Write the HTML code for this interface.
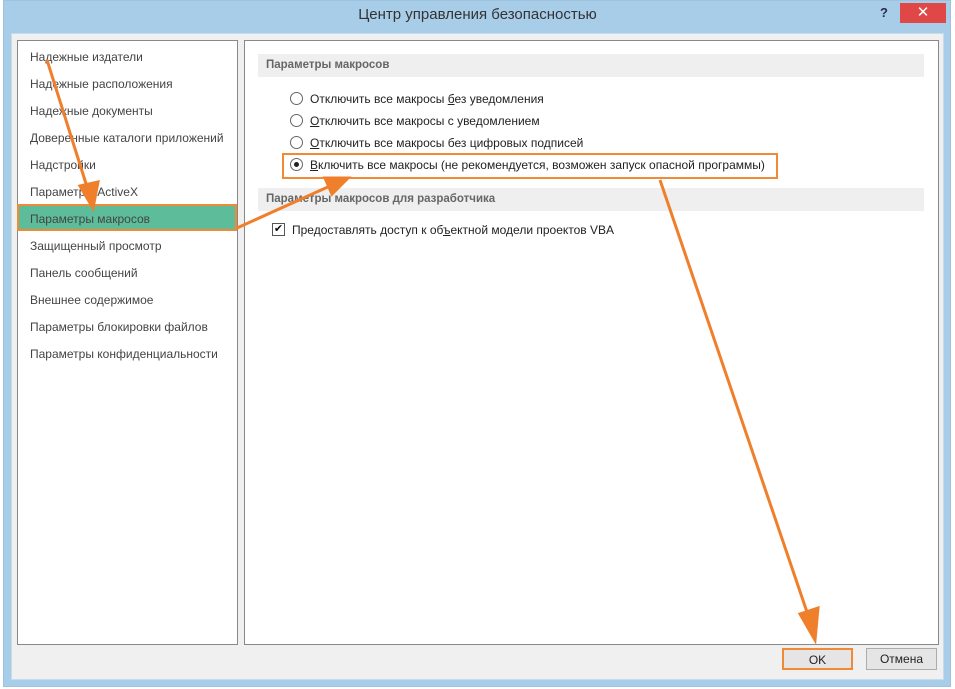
<!DOCTYPE html>
<html><head><meta charset="utf-8"><style>
*{margin:0;padding:0;box-sizing:border-box}
body{width:955px;height:689px;background:#fff;position:relative;overflow:hidden;font-family:"Segoe UI","Liberation Sans","DejaVu Sans",sans-serif;font-size:12px;color:#333}
.win{position:absolute;left:3px;top:0;width:948px;height:687px;background:#a8cde9;border:1px solid #9fc2de}
.title{position:absolute;left:0;top:6px;width:955px;text-align:center;font-size:15px;color:#333}
.help{position:absolute;left:880px;top:5px;font-weight:bold;color:#2b2b55;font-size:13px}
.close{position:absolute;left:900px;top:3px;width:46px;height:20px;background:#e04848;color:#fff;text-align:center;font-size:15px;line-height:20px}
.body{position:absolute;left:11px;top:33px;width:933px;height:647px;background:#f0f0f0;border:1px solid #c7dbea}
.left{position:absolute;left:17px;top:40px;width:221px;height:605px;background:#fff;border:1px solid #888}
.right{position:absolute;left:244px;top:40px;width:695px;height:605px;background:#fff;border:1px solid #888}
.item{position:absolute;left:30px;font-size:12px;color:#444}
.sel{position:absolute;left:17px;top:204px;width:220px;height:27px;background:#5dbd9a;border:2px solid #f08a36}
.hdr{position:absolute;left:258px;width:666px;height:23px;background:#efefef;color:#666;font-weight:bold;font-size:11.5px;padding:5px 8px}
.opt{position:absolute;left:310px;color:#222;font-size:12px}
.rad{position:absolute;left:290px;width:13px;height:13px;border:1px solid #666;border-radius:50%;background:#fff}
.btn{position:absolute;top:648px;width:71px;height:22px;background:#e5e5e5;border:1px solid #acacac;text-align:center;line-height:20px;font-size:12px;color:#222}
</style></head><body>
<div class="win"></div>
<div class="title">Центр управления безопасностью</div>
<div class="help">?</div>
<div class="close">✕</div>
<div class="body"></div>
<div class="left"></div>
<div class="right"></div>
<div class="sel"></div>
<div class="item" style="top:50px">Надежные издатели</div>
<div class="item" style="top:77px">Надежные расположения</div>
<div class="item" style="top:104px">Надежные документы</div>
<div class="item" style="top:131px">Доверенные каталоги приложений</div>
<div class="item" style="top:158px">Надстройки</div>
<div class="item" style="top:185px">Параметры ActiveX</div>
<div class="item" style="top:212px">Параметры макросов</div>
<div class="item" style="top:239px">Защищенный просмотр</div>
<div class="item" style="top:266px">Панель сообщений</div>
<div class="item" style="top:293px">Внешнее содержимое</div>
<div class="item" style="top:320px">Параметры блокировки файлов</div>
<div class="item" style="top:347px">Параметры конфиденциальности</div>
<div class="hdr" style="top:54px">Параметры макросов</div>
<div class="rad" style="top:92px"></div><div class="opt" style="top:92px">Отключить все макросы <u>б</u>ез уведомления</div>
<div class="rad" style="top:114px"></div><div class="opt" style="top:114px"><u>О</u>тключить все макросы с уведомлением</div>
<div class="rad" style="top:136px"></div><div class="opt" style="top:136px"><u>О</u>тключить все макросы без цифровых подписей</div>
<div class="rad" style="top:158px"><div style="position:absolute;left:3px;top:3px;width:5px;height:5px;border-radius:50%;background:#222"></div></div><div class="opt" style="top:158px"><u>В</u>ключить все макросы (не рекомендуется, возможен запуск опасной программы)</div>
<div style="position:absolute;left:282px;top:153px;width:496px;height:26px;border:2px solid #f08a36"></div>
<div class="hdr" style="top:188px">Параметры макросов для разработчика</div>
<div style="position:absolute;left:272px;top:223px;width:13px;height:13px;border:1px solid #555;background:#fff;font-size:11px;line-height:11px;text-align:center;color:#111">✔</div>
<div class="opt" style="left:292px;top:223px">Предоставлять доступ к об<u>ъ</u>ектной модели проектов VBA</div>
<div class="btn" style="left:782px;border:2px solid #f08a36">OK</div>
<div class="btn" style="left:866px">Отмена</div>
<svg style="position:absolute;left:0;top:0" width="955" height="689">
<g stroke="#f07f2c" stroke-width="3" fill="#f07f2c">
<line x1="47" y1="60" x2="88" y2="190"/>
<polygon points="80,186 98,182 93,208"/>
<line x1="237" y1="228" x2="330" y2="186"/>
<polygon points="325,178 332,194 348,178"/>
<line x1="660" y1="180" x2="808" y2="615"/>
<polygon points="800,614 818,608 815,640"/>
</g></svg>
</body></html>
